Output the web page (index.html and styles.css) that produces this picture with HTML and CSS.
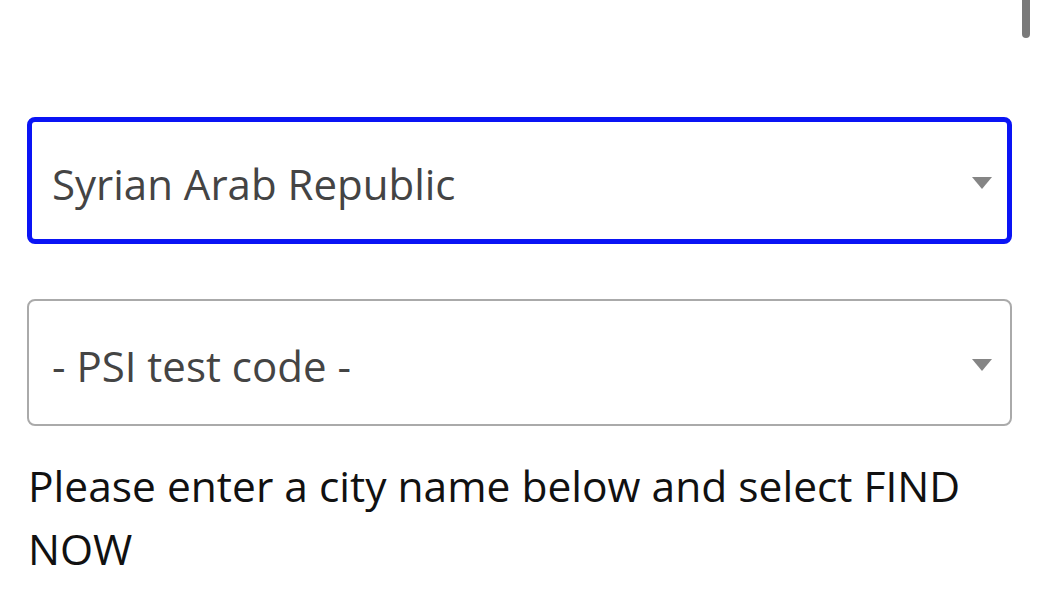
FILE: index.html
```html
<!DOCTYPE html>
<html lang="en">
<head>
<meta charset="utf-8">
<link rel="stylesheet" href="styles.css">
</head>
<body>
<div class="scroll-indicator"></div>
<main class="form">
  <div class="select select--focused">
    <span class="select__value">Syrian Arab Republic</span>
    <span class="select__arrow"></span>
  </div>
  <div class="select">
    <span class="select__value">- PSI test code -</span>
    <span class="select__arrow"></span>
  </div>
  <p class="hint">Please enter a city name below and select FIND NOW</p>
</main>
</body>
</html>
```

FILE: styles.css
```css
html, body {
  margin: 0;
  padding: 0;
  background: #ffffff;
}

body {
  font-family: "Open Sans", "Noto Sans", sans-serif;
  width: 1038px;
  height: 600px;
  overflow: hidden;
  position: relative;
}

.scroll-indicator {
  position: absolute;
  top: 0;
  left: 1022px;
  width: 8px;
  height: 38px;
  background: #7a7a7a;
  border-radius: 0 0 4px 4px;
}

.form {
  padding: 117px 27px 0 27px;
  width: 985px;
  display: flex;
  flex-direction: column;
}

.select {
  box-sizing: border-box;
  height: 127px;
  border: 2px solid #aaaaaa;
  border-radius: 8px;
  display: flex;
  align-items: center;
  justify-content: space-between;
  padding: 0 18px 0 23px;
  margin-bottom: 55px;
}

.select--focused {
  border: 5px solid #0a14f5;
  padding: 0 15px 0 20px;
}

.select__value {
  font-size: 42px;
  color: #444444;
  line-height: 1;
  padding-top: 6px;
}

.select__arrow {
  width: 0;
  height: 0;
  border-left: 10.5px solid transparent;
  border-right: 10.5px solid transparent;
  border-top: 12px solid #858585;
  margin-top: 4px;
}

.form .select:nth-child(2) {
  margin-bottom: 0;
}

.hint {
  margin: 28px 0 0 1px;
  font-size: 42.5px;
  line-height: 63px;
  color: #111111;
}
```
